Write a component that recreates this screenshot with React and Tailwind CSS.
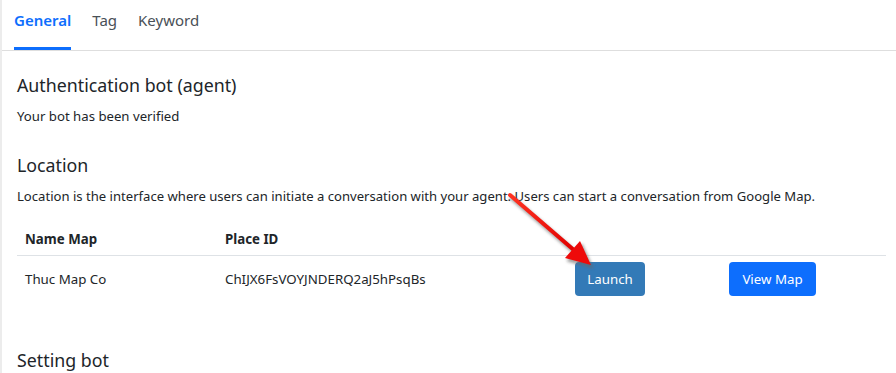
import React from 'react';

const font = { fontFamily: '"Noto Sans", "Open Sans", sans-serif' };

function RedArrow() {
  // annotation arrow drawn over the page
  return (
    <svg className="absolute left-0 top-0 pointer-events-none" width="896" height="373">
      <defs>
        <filter id="sh" x="-20%" y="-20%" width="140%" height="140%">
          <feGaussianBlur stdDeviation="1.8" />
        </filter>
        <linearGradient id="rg" x1="0" y1="0" x2="1" y2="1">
          <stop offset="0" stopColor="#ff3322" />
          <stop offset="1" stopColor="#e00000" />
        </linearGradient>
      </defs>
      <g transform="translate(2,3)" fill="#666" stroke="#666" opacity="0.6" filter="url(#sh)">
        <line x1="508" y1="195" x2="573" y2="251" strokeWidth="4.5" strokeLinecap="round" />
        <polygon points="589,265 563,258 578,241" />
      </g>
      <line x1="508" y1="195" x2="573" y2="251" stroke="url(#rg)" strokeWidth="4" strokeLinecap="round" />
      <polygon points="589,265 563,258 578,241" fill="#ee0a0a" />
    </svg>
  );
}

export default function App() {
  return (
    <div className="relative w-[896px] h-[373px] overflow-hidden bg-white text-[#212529] border-l-2 border-[#ececec]" style={font}>
      {/* Tabs */}
      <div className="flex h-[51px] border-b border-[#dedede] pl-[12px] text-[15px]">
        <div className="flex flex-col justify-between">
          <span className="pt-[9px] font-semibold text-[#0d6efd]">General</span>
          <span className="h-[3px] bg-[#0d6efd]" />
        </div>
        <span className="pt-[9px] ml-[21px] text-[#495057]">Tag</span>
        <span className="pt-[9px] ml-[21px] text-[#495057]">Keyword</span>
      </div>

      <div className="pl-[15px] pr-[8px]">
        <h2 className="mt-[22px] text-[17.8px] leading-[24px] font-normal">Authentication bot (agent)</h2>
        <p className="mt-[9px] text-[13.2px] leading-[21px]">Your bot has been verified</p>

        <h2 className="mt-[26px] text-[17.8px] leading-[24px] font-normal">Location</h2>
        <p className="mt-[9px] text-[13.1px] leading-[21px]">
          Location is the interface where users can initiate a conversation with your agent. Users can start a conversation from Google Map.
        </p>

        {/* Table */}
        <div className="mt-[14px] w-[869px] text-[13.3px] leading-[21px]">
          <div className="grid grid-cols-[200px_350px_154px_165px] border-b border-[#dee2e6] pt-[8px] pb-[5px] font-bold">
            <span className="px-[8px]">Name Map</span>
            <span className="px-[8px]">Place ID</span>
            <span />
            <span />
          </div>
          <div className="grid grid-cols-[200px_350px_154px_165px] items-center pt-[6px] pb-[6px]">
            <span className="px-[8px]">Thuc Map Co</span>
            <span className="px-[8px]">ChIJX6FsVOYJNDERQ2aJ5hPsqBs</span>
            <span className="px-[8px]">
              <button className="h-[34px] w-[70px] rounded-[4px] bg-[#337ab7] text-white">Launch</button>
            </span>
            <span className="px-[8px]">
              <button className="h-[34px] w-[87px] rounded-[4px] bg-[#0d6efd] text-white">View Map</button>
            </span>
          </div>
        </div>

        <h2 className="mt-[46px] text-[17.8px] leading-[24px] font-normal">Setting bot</h2>
      </div>

      <RedArrow />
    </div>
  );
}
